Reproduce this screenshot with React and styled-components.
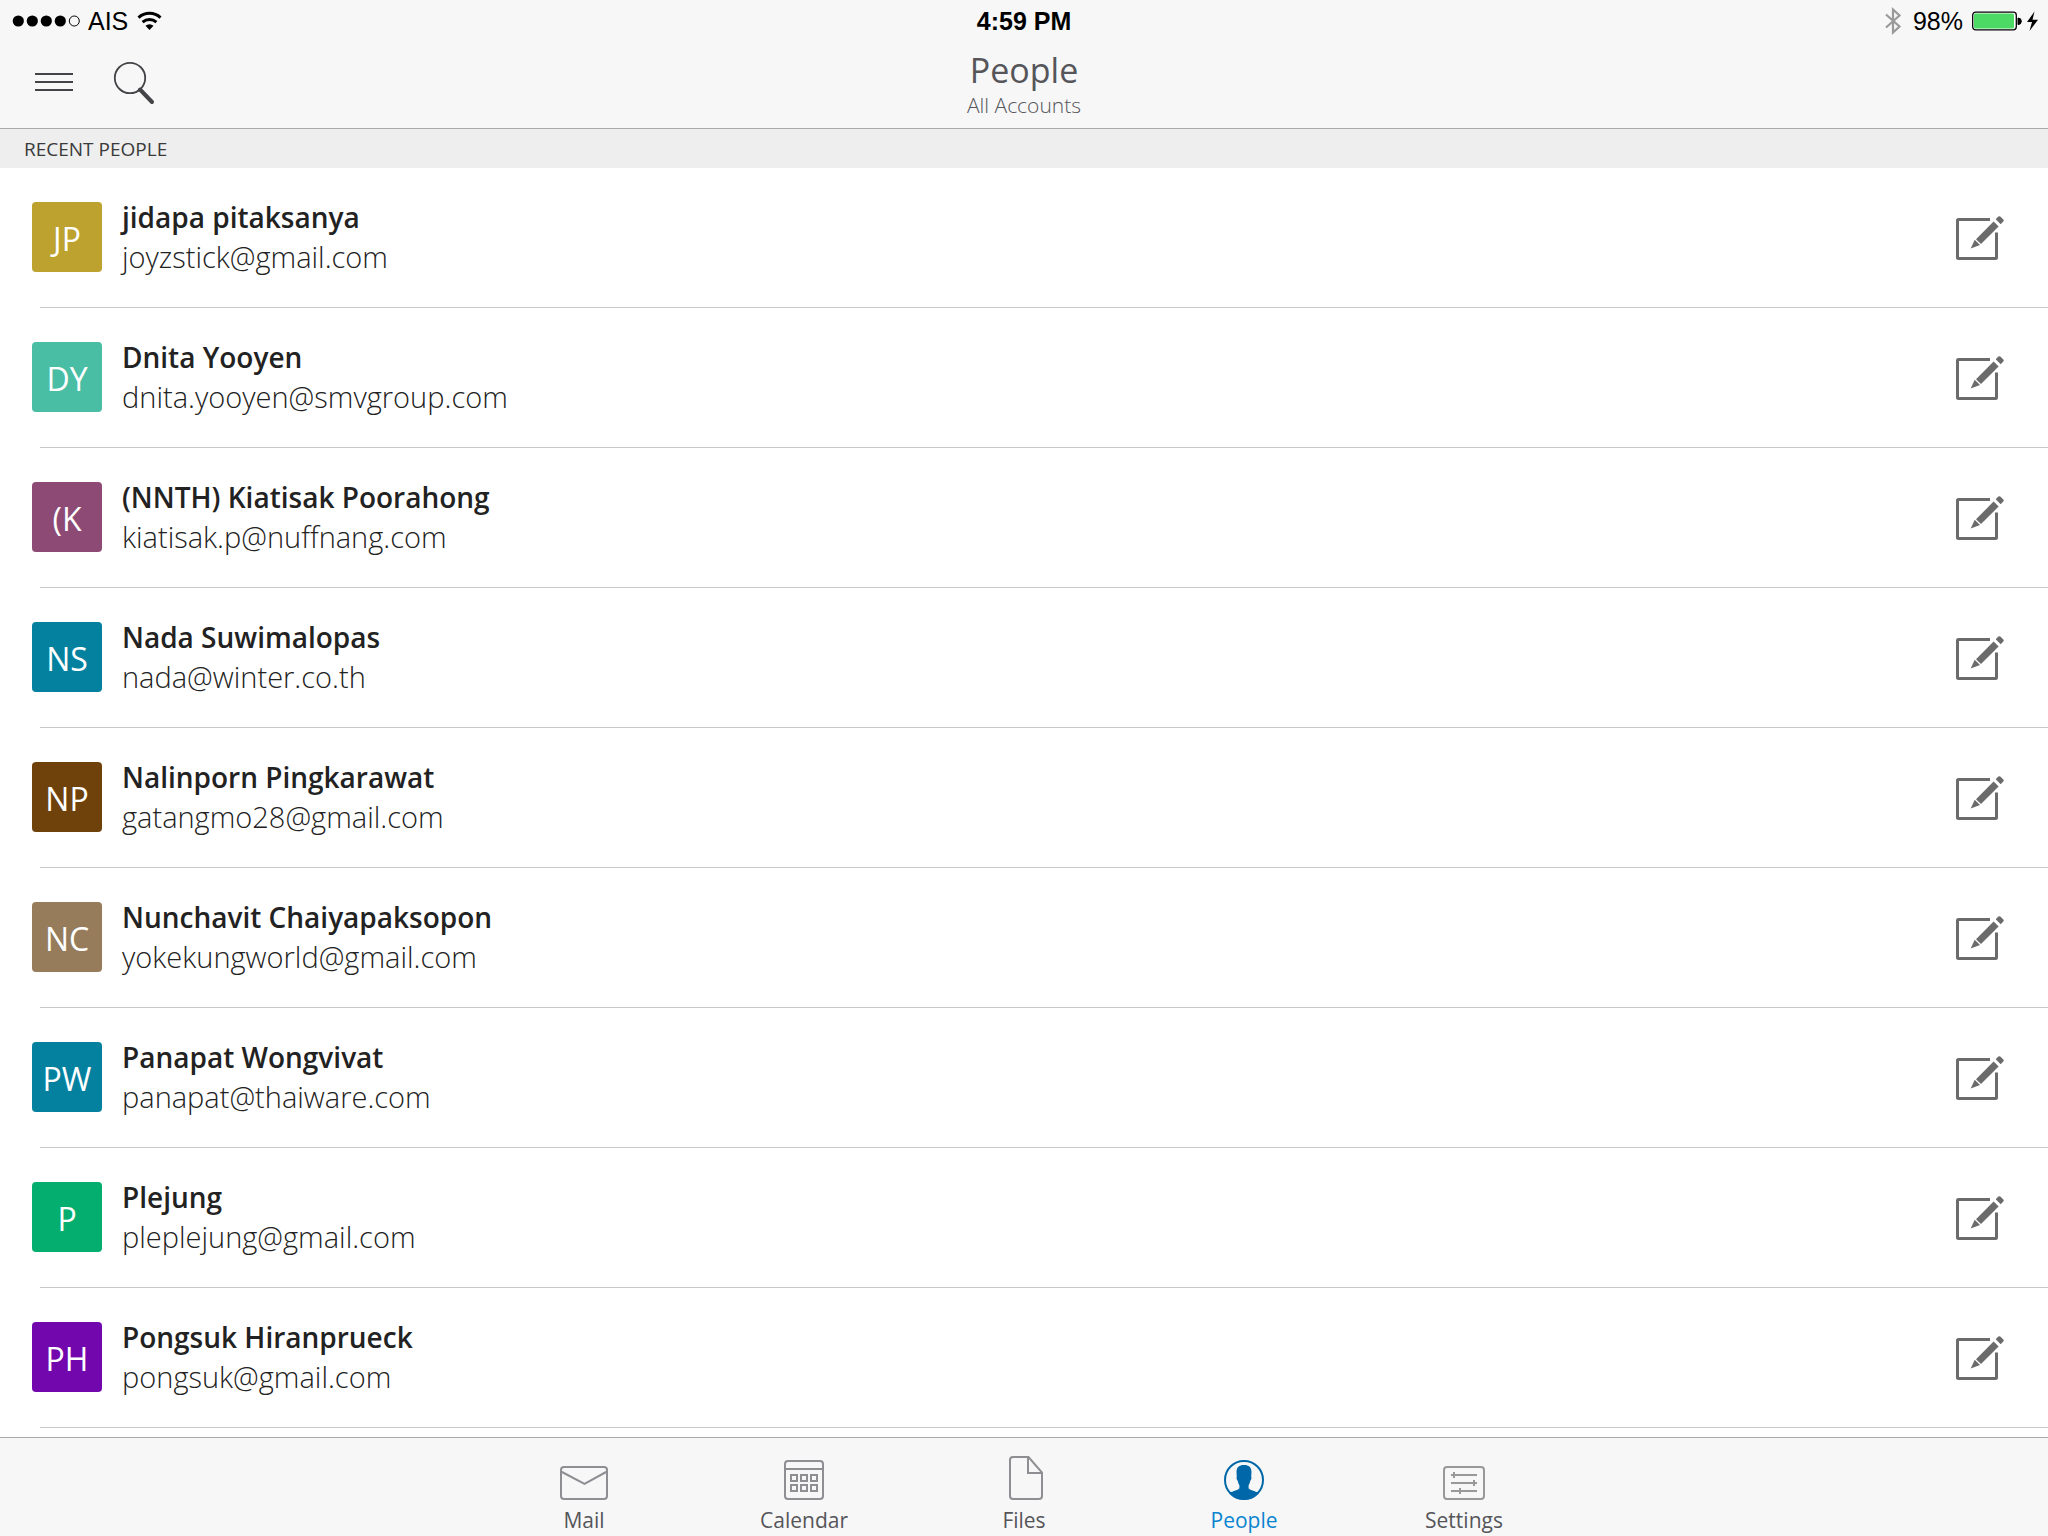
import styled, { createGlobalStyle } from "styled-components";

const GlobalStyle = createGlobalStyle`
  * {
    box-sizing: border-box;
  }
  body {
    margin: 0;
    background: #fff;
    color: #222;
    font-family: "Open Sans", "Noto Sans", sans-serif;
  }
  button {
    border: 0;
    padding: 0;
    background: none;
    font: inherit;
    color: inherit;
    cursor: pointer;
  }
  svg {
    display: block;
  }
`;

const Page = styled.div`
  min-height: 100vh;
  display: flex;
  flex-direction: column;
`;

const Header = styled.header`
  background: #f7f7f7;
  border-bottom: 1px solid #a9a9a9;
`;

const StatusBar = styled.div`
  display: grid;
  grid-template-columns: 1fr auto 1fr;
  align-items: center;
  height: 42px;
  padding: 0 9px;
  font-family: "Liberation Sans", sans-serif;
  font-size: 25px;
  line-height: 42px;
  color: #000;
`;

const StatusGroup = styled.div`
  display: flex;
  align-items: center;
  justify-content: ${(props) => (props.$end ? "flex-end" : "flex-start")};
  gap: 9px;
`;

const Carrier = styled.span`
  display: flex;
  align-items: center;
  gap: 6px;
`;

const Clock = styled.time`
  font-weight: bold;
`;

const NavBar = styled.div`
  display: grid;
  grid-template-columns: 1fr auto 1fr;
  height: 86px;
  padding: 0 32px;
`;

const NavActions = styled.div`
  display: flex;
  align-items: center;
  gap: 36px;
  height: 80px;
`;

const IconButton = styled.button`
  display: flex;
  align-items: center;
  justify-content: center;
  min-width: 44px;
  min-height: 44px;
`;

const Heading = styled.div`
  display: flex;
  flex-direction: column;
  align-items: center;
  padding-top: 8px;
  color: #55555a;
`;

const Title = styled.h1`
  margin: 0;
  font-size: 34px;
  font-weight: 400;
  line-height: 40px;
`;

const Subtitle = styled.p`
  margin: 0;
  font-size: 21px;
  font-weight: 300;
  line-height: 30px;
`;

const Main = styled.main`
  flex: 1;
`;

const SectionTitle = styled.h2`
  margin: 0;
  padding: 2px 24px 0;
  background: #eee;
  color: #3a3a3a;
  font-size: 19px;
  font-weight: 400;
  line-height: 37px;
`;

const List = styled.ul`
  list-style: none;
  margin: 0;
  padding: 0;
`;

const Person = styled.li`
  &::after {
    content: "";
    display: block;
    height: 1px;
    margin-left: 40px;
    background: #c8c8c8;
  }
`;

const PersonRow = styled.div`
  display: flex;
  align-items: center;
  gap: 20px;
  padding: 29px 44px 30px 32px;
`;

const Avatar = styled.div`
  width: 70px;
  height: 70px;
  border-radius: 4px;
  padding-top: 2px;
  background: ${(props) => props.$color};
  color: #fff;
  font-size: 32px;
  line-height: 70px;
  text-align: center;
`;

const Details = styled.div`
  flex: 1;
  line-height: 40px;
`;

const Name = styled.div`
  font-size: 28px;
  font-weight: 600;
`;

const Email = styled.div`
  font-size: 29px;
  font-weight: 300;
`;

const TabBar = styled.nav`
  display: flex;
  justify-content: center;
  height: 99px;
  background: #f7f7f7;
  border-top: 1px solid #a9a9a9;
`;

const Tab = styled.button`
  display: flex;
  flex-direction: column;
  align-items: center;
  justify-content: flex-end;
  gap: 4px;
  width: 220px;
  font-size: 21px;
  line-height: 32px;
  color: ${(props) => (props.$active ? "#0a84d0" : "#55555a")};
`;

const people = [
  { initials: "JP", name: "jidapa pitaksanya", email: "joyzstick@gmail.com", color: "#bea22f" },
  { initials: "DY", name: "Dnita Yooyen", email: "dnita.yooyen@smvgroup.com", color: "#4abda5" },
  { initials: "(K", name: "(NNTH) Kiatisak Poorahong", email: "kiatisak.p@nuffnang.com", color: "#8c4a75" },
  { initials: "NS", name: "Nada Suwimalopas", email: "nada@winter.co.th", color: "#0581a0" },
  { initials: "NP", name: "Nalinporn Pingkarawat", email: "gatangmo28@gmail.com", color: "#6f410b" },
  { initials: "NC", name: "Nunchavit Chaiyapaksopon", email: "yokekungworld@gmail.com", color: "#967c5b" },
  { initials: "PW", name: "Panapat Wongvivat", email: "panapat@thaiware.com", color: "#0581a0" },
  { initials: "P", name: "Plejung", email: "pleplejung@gmail.com", color: "#04ae6e" },
  { initials: "PH", name: "Pongsuk Hiranprueck", email: "pongsuk@gmail.com", color: "#7107ad" },
];

const SignalDots = () => (
  <svg width="73" height="14" viewBox="-3 0 73 14">
    {[6, 20, 34, 48].map((x) => (
      <circle key={x} cx={x + 0.3} cy="7" r="5.6" />
    ))}
    <circle cx="62.3" cy="7" r="5" fill="none" stroke="#000" />
  </svg>
);

const WifiIcon = () => (
  <svg width="26" height="20" viewBox="0 0 26 20">
    <g fill="none" stroke="#000" strokeWidth="3">
      <path d="M1.5 6.6a16.4 16.4 0 0 1 22 0" />
      <path d="M5.6 11.2a10.5 10.5 0 0 1 13.8 0" />
    </g>
    <path d="M12.5 19l-4-4.3a6 6 0 0 1 8 0z" />
  </svg>
);

const BluetoothIcon = () => (
  <svg width="20" height="28" viewBox="0 0 20 28" fill="none" stroke="#999" strokeWidth="2.2">
    <path d="M2 7.500l13.500 12L9 25.500v-23l6.500 6L2 20.500" />
  </svg>
);

const BatteryIcon = () => (
  <svg width="67" height="20" viewBox="0 0 67 20">
    <rect x="0.7" y="1.2" width="43.6" height="17.6" rx="3" fill="#fff" stroke="#000" strokeWidth="1.3" />
    <rect x="2" y="2.5" width="40" height="15" rx="1.5" fill="#4cd964" />
    <path d="M46 7a3 3 0 0 1 0 6.600z" stroke="#000" strokeWidth="1" />
    <path d="M62.5 0.500L55 11h5l-2.500 9L66 8.700h-5.500z" />
  </svg>
);

const MenuIcon = () => (
  <svg width="38" height="20" viewBox="0 0 38 20" stroke="#444448" strokeWidth="2">
    <path d="M0 2h38M0 10h38M0 18h38" />
  </svg>
);

const SearchIcon = () => (
  <svg width="42" height="46" viewBox="0 -2 42 46" fill="none" stroke="#444448">
    <circle cx="17" cy="17" r="15.200" strokeWidth="1.800" />
    <path d="M27 28.500L39 41" strokeWidth="4" strokeLinecap="round" />
  </svg>
);

const ComposeIcon = () => (
  <svg width="48" height="48" viewBox="0 -2 48 48" fill="#6b6b6b">
    <path
      d="M34 4.500H2.500a1 1 0 0 0-1 1v37a1 1 0 0 0 1 1h37a1 1 0 0 0 1-1V17.500"
      fill="none"
      stroke="#6b6b6b"
      strokeWidth="3"
    />
    <path d="M14.700 33.500l4-8.800 5.300 5.300z" />
    <path d="M20 24.200L37.600 6.600l5 5L25 29z" />
    <path d="M39.700 4.200l2.600-2.600a1.500 1.500 0 0 1 2 0l3 3a1.500 1.500 0 0 1 0 2l-2.600 2.600z" />
  </svg>
);

const MailIcon = () => (
  <svg width="48" height="34" viewBox="0 0 48 34" fill="none" stroke="#8e8e93" strokeWidth="2">
    <rect x="1" y="1" width="46" height="32" rx="3" />
    <path d="M1 5.500l23.500 12.300L47 5.500" />
  </svg>
);

const CalendarIcon = () => (
  <svg width="40" height="40" viewBox="0 0 40 40" fill="none" stroke="#8e8e93" strokeWidth="2">
    <rect x="1" y="1" width="38" height="38" rx="3" />
    <path d="M1 9h38" />
    {[15, 25].map((y) =>
      [7, 17, 27].map((x) => <rect key={`${x}-${y}`} x={x} y={y} width="6" height="6" />)
    )}
  </svg>
);

const FileIcon = () => (
  <svg width="38" height="44" viewBox="-4 0 38 44" fill="none" stroke="#8e8e93" strokeWidth="2">
    <path d="M19.500 1H4a3 3 0 0 0-3 3v36a3 3 0 0 0 3 3h26a3 3 0 0 0 3-3V16.500z" />
    <path d="M19 1v16h14" />
  </svg>
);

const PeopleIcon = () => (
  <svg width="40" height="40" viewBox="0 0 40 40" fill="#0067a8">
    <circle cx="20" cy="20" r="19" fill="none" stroke="#0067a8" strokeWidth="2" />
    <path d="M20 5c5 0 7.500 2.500 7.500 7 0 1.500-.2 3-.3 4.500.6 1.500 0 3.500-1 4.500-.3 2-1 3.200-1.600 4.200v3c1 1.800 3.400 2 6 3 1.700.6 3 1 4 2C31 37.500 26 39.500 20 39.500S9 37.500 5.400 33.200c1-1 2.300-1.400 4-2 2.600-1 5-1.200 6-3v-3c-.6-1-1.300-2.200-1.600-4.200-1-1-1.600-3-1-4.500-.1-1.500-.3-3-.3-4.500 0-4.500 2.500-7 7.500-7z" />
  </svg>
);

const SettingsIcon = () => (
  <svg width="42" height="34" viewBox="0 0 42 34" fill="none" stroke="#999" strokeWidth="2">
    <rect x="1" y="1" width="40" height="32" rx="3" />
    <path d="M8 9h26M8 17h26M8 25h26M11 6v6M31 14v6M17 22v6" />
  </svg>
);

const tabs = [
  { label: "Mail", Icon: MailIcon },
  { label: "Calendar", Icon: CalendarIcon },
  { label: "Files", Icon: FileIcon },
  { label: "People", Icon: PeopleIcon, active: true },
  { label: "Settings", Icon: SettingsIcon },
];

const App = () => {
  return (
    <Page>
      <GlobalStyle />
      <Header>
        <StatusBar>
          <StatusGroup>
            <Carrier>
              <SignalDots />
              AIS
            </Carrier>
            <WifiIcon />
          </StatusGroup>
          <Clock>4:59 PM</Clock>
          <StatusGroup $end>
            <BluetoothIcon />
            <span>98%</span>
            <BatteryIcon />
          </StatusGroup>
        </StatusBar>
        <NavBar>
          <NavActions>
            <IconButton aria-label="Menu"><MenuIcon /></IconButton>
            <IconButton aria-label="Search"><SearchIcon /></IconButton>
          </NavActions>
          <Heading>
            <Title>People</Title>
            <Subtitle>All Accounts</Subtitle>
          </Heading>
        </NavBar>
      </Header>
      <Main>
        <SectionTitle>RECENT PEOPLE</SectionTitle>
        <List>
          {people.map((person) => (
            <Person key={person.email}>
              <PersonRow>
                <Avatar $color={person.color}>{person.initials}</Avatar>
                <Details>
                  <Name>{person.name}</Name>
                  <Email>{person.email}</Email>
                </Details>
                <IconButton aria-label={`Write to ${person.name}`}><ComposeIcon /></IconButton>
              </PersonRow>
            </Person>
          ))}
        </List>
      </Main>
      <TabBar>
        {tabs.map(({ label, Icon, active }) => (
          <Tab key={label} $active={active} aria-current={active ? "page" : undefined}>
            <Icon />
            {label}
          </Tab>
        ))}
      </TabBar>
    </Page>
  );
};

export default App;
